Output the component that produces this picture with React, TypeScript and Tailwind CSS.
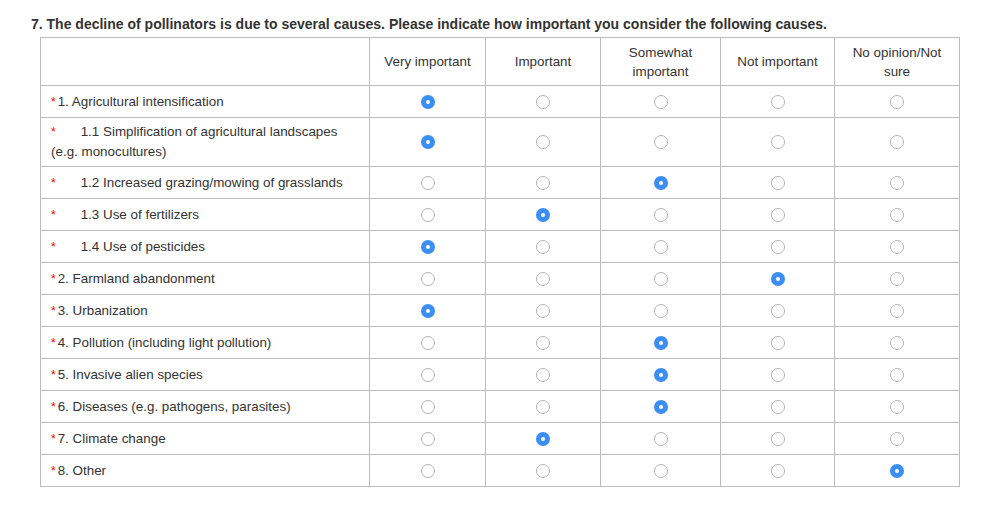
import React from 'react';

const columns = ['Very important', 'Important', 'Somewhat important', 'Not important', 'No opinion/Not sure'];

interface Cause {
  label: string;
  rest?: string;
  sub?: boolean;
  choice: number;
}

const causes: Cause[] = [
  { label: '1. Agricultural intensification', choice: 0 },
  { label: '1.1 Simplification of agricultural landscapes', rest: '(e.g. monocultures)', sub: true, choice: 0 },
  { label: '1.2 Increased grazing/mowing of grasslands', sub: true, choice: 2 },
  { label: '1.3 Use of fertilizers', sub: true, choice: 1 },
  { label: '1.4 Use of pesticides', sub: true, choice: 0 },
  { label: '2. Farmland abandonment', choice: 3 },
  { label: '3. Urbanization', choice: 0 },
  { label: '4. Pollution (including light pollution)', choice: 2 },
  { label: '5. Invasive alien species', choice: 2 },
  { label: '6. Diseases (e.g. pathogens, parasites)', choice: 2 },
  { label: '7. Climate change', choice: 1 },
  { label: '8. Other', choice: 4 },
];

const Radio: React.FC<{ checked: boolean }> = ({ checked }) =>
  checked ? (
    <span className="inline-flex h-[14px] w-[14px] items-center justify-center rounded-full bg-[#3b8ef6] align-middle">
      <span className="h-[4px] w-[4px] rounded-full bg-white" />
    </span>
  ) : (
    <span className="inline-block h-[14px] w-[14px] rounded-full border border-[#b4b4b4] bg-white align-middle" />
  );

export default function App() {
  return (
    <div
      className="min-h-screen bg-white pl-[31px] pt-[14px] text-[#333]"
      style={{ fontFamily: '"Liberation Sans", Arial, Helvetica, sans-serif' }}
    >
      <h2 className="text-[14px] font-bold leading-5">
        7. The decline of pollinators is due to several causes. Please indicate how important you consider the following causes.
      </h2>
      <table className="ml-[9px] mt-[3px] w-[919px] table-fixed border-collapse text-[13.4px] leading-5">
        <colgroup>
          <col className="w-[329px]" />
          <col className="w-[116px]" />
          <col className="w-[115px]" />
          <col className="w-[120px]" />
          <col className="w-[114px]" />
          <col className="w-[125px]" />
        </colgroup>
        <thead>
          <tr className="h-[48px]">
            <th className="border border-[#bcbcbc]" />
            {columns.map((c) => (
              <th key={c} className="border border-[#bcbcbc] px-3 text-center font-normal leading-[19px]">
                {c}
              </th>
            ))}
          </tr>
        </thead>
        <tbody>
          {causes.map((cause, i) => (
            <tr key={i} className={cause.rest ? 'h-[49px]' : 'h-[32px]'}>
              <td className="border border-[#bcbcbc] px-[10px] py-[4px]">
                <span className="mr-[2px] text-[12px] text-[#f00]">*</span>
                {cause.sub ? <span className="ml-[23px]">{cause.label}</span> : cause.label}
                {cause.rest && (
                  <>
                    <br />
                    {cause.rest}
                  </>
                )}
              </td>
              {columns.map((c, j) => (
                <td key={c} className="border border-[#bcbcbc] text-center">
                  <Radio checked={cause.choice === j} />
                </td>
              ))}
            </tr>
          ))}
        </tbody>
      </table>
    </div>
  );
}
